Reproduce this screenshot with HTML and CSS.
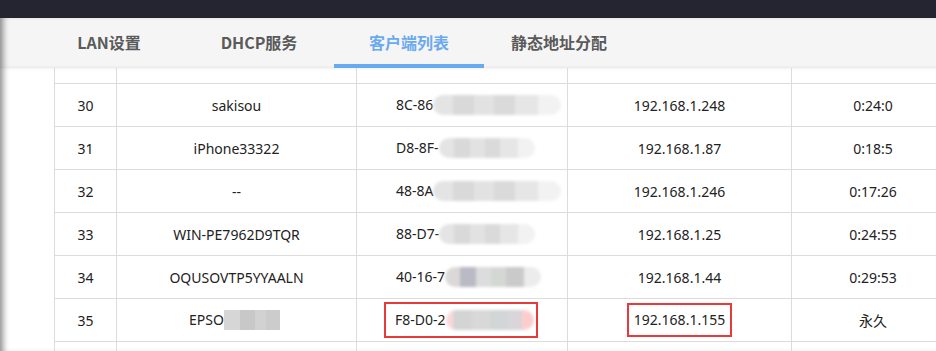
FILE: index.html
```html
<!DOCTYPE html>
<html lang="zh-CN">
<head>
  <meta charset="UTF-8">
  <title>客户端列表</title>
  <link rel="stylesheet" href="styles.css">
</head>
<body>
  <div class="topbar"></div>
  <div class="tabs">
    <div class="tab">LAN设置</div>
    <div class="tab">DHCP服务</div>
    <div class="tab active">客户端列表</div>
    <div class="tab">静态地址分配</div>
  </div>
  <div class="list">
    <table>
      <colgroup>
        <col class="c-no"><col class="c-name"><col class="c-mac"><col class="c-ip"><col class="c-time">
      </colgroup>
      <tr class="cut"><td></td><td></td><td></td><td></td><td></td></tr>
      <tr><td>30</td><td>sakisou</td><td class="mac">8C-86<span class="blur wide"></span></td><td>192.168.1.248</td><td>0:24:0</td></tr>
      <tr><td>31</td><td>iPhone33322</td><td class="mac">D8-8F-<span class="blur"></span></td><td>192.168.1.87</td><td>0:18:5</td></tr>
      <tr><td>32</td><td>--</td><td class="mac">48-8A<span class="blur wide"></span></td><td>192.168.1.246</td><td>0:17:26</td></tr>
      <tr><td>33</td><td>WIN-PE7962D9TQR</td><td class="mac">88-D7-<span class="blur"></span></td><td>192.168.1.25</td><td>0:24:55</td></tr>
      <tr><td>34</td><td>OQUSOVTP5YYAALN</td><td class="mac">40-16-7<span class="blur dark"></span></td><td>192.168.1.44</td><td>0:29:53</td></tr>
      <tr><td>35</td><td class="name-l">EPSO<span class="mosaic"></span></td><td class="mac"><span class="mark mark-mac">F8-D0-2<span class="blur pink"></span></span></td><td><span class="mark">192.168.1.155</span></td><td>永久</td></tr>
      <tr class="cut"><td></td><td></td><td></td><td></td><td></td></tr>
    </table>
  </div>
</body>
</html>
```

FILE: styles.css
```css
body { margin: 0; background: #fff; color: #222; font-family: "Noto Sans", "Noto Sans CJK SC", sans-serif; overflow: hidden; }
.topbar { height: 18px; background: #252531; }
.tabs { display: flex; height: 50px; padding-left: 34px; background: #f5f5f5; box-shadow: inset 7px 0 6px -4px rgba(0,0,0,.45); }
.tab { width: 150px; box-sizing: border-box; padding-top: 12px; text-align: center; font-size: 16px; font-weight: bold; color: #5a5a5a; font-family: "Noto Sans CJK SC", sans-serif; border-bottom: 4px solid transparent; }
.tab.active { color: #6aaaf0; border-bottom-color: #66aaf0; }
.list { padding-left: 54px; box-shadow: inset 7px 0 6px -4px rgba(0,0,0,.45); height: 283px; overflow: hidden; }
table { border-collapse: collapse; table-layout: fixed; width: 900px; font-size: 14px; }
.c-no { width: 62px; } .c-name { width: 240px; } .c-mac { width: 211px; } .c-ip { width: 224px; } .c-time { width: 163px; }
td { border: 1px solid #dcdcdc; height: 42px; padding: 0; text-align: center; white-space: nowrap; }
tr.cut td { height: 15px; border-top: none; }
td.mac { text-align: left; padding-left: 39px; }
td.name-l { text-align: left; padding-left: 72px; }
.blur { display: inline-block; width: 96px; height: 20px; vertical-align: -5px; border-radius: 10px; filter: blur(1.5px);
  background: linear-gradient(90deg, #e4e4e4 0 16%, #d9d9d9 16% 32%, #e2e2e2 32% 48%, #dadada 48% 64%, #e6e6e6 64% 82%, #f2f2f2 82%); }
.blur.wide { width: 128px; }
.blur.dark { background: linear-gradient(90deg, #ddd8d8 0 16%, #b9bac4 16% 32%, #dcdcdc 32% 48%, #d4d8d4 48% 64%, #cacaca 64% 82%, #ececec 82%); }
.blur.pink { width: 88px; background: linear-gradient(90deg, #fbd8d8 0 8%, #d4d4d4 8% 30%, #d8d8d8 30% 50%, #d2d6d6 50% 70%, #d9d5d8 70% 86%, #fdcdcd 86%); }
.mosaic { display: inline-block; width: 56px; height: 20px; vertical-align: -5px;
  background: linear-gradient(90deg, #d6d6d6 0 28%, #c8c8c8 28% 55%, #d2d2d2 55% 75%, #cccccc 75%); }
.mark { display: inline-block; border: 2px solid #e83a3a; padding: 5px 5px 6px; }
.mark-mac { margin-left: -12px; padding: 6px 2px 6px 9px; }
```
